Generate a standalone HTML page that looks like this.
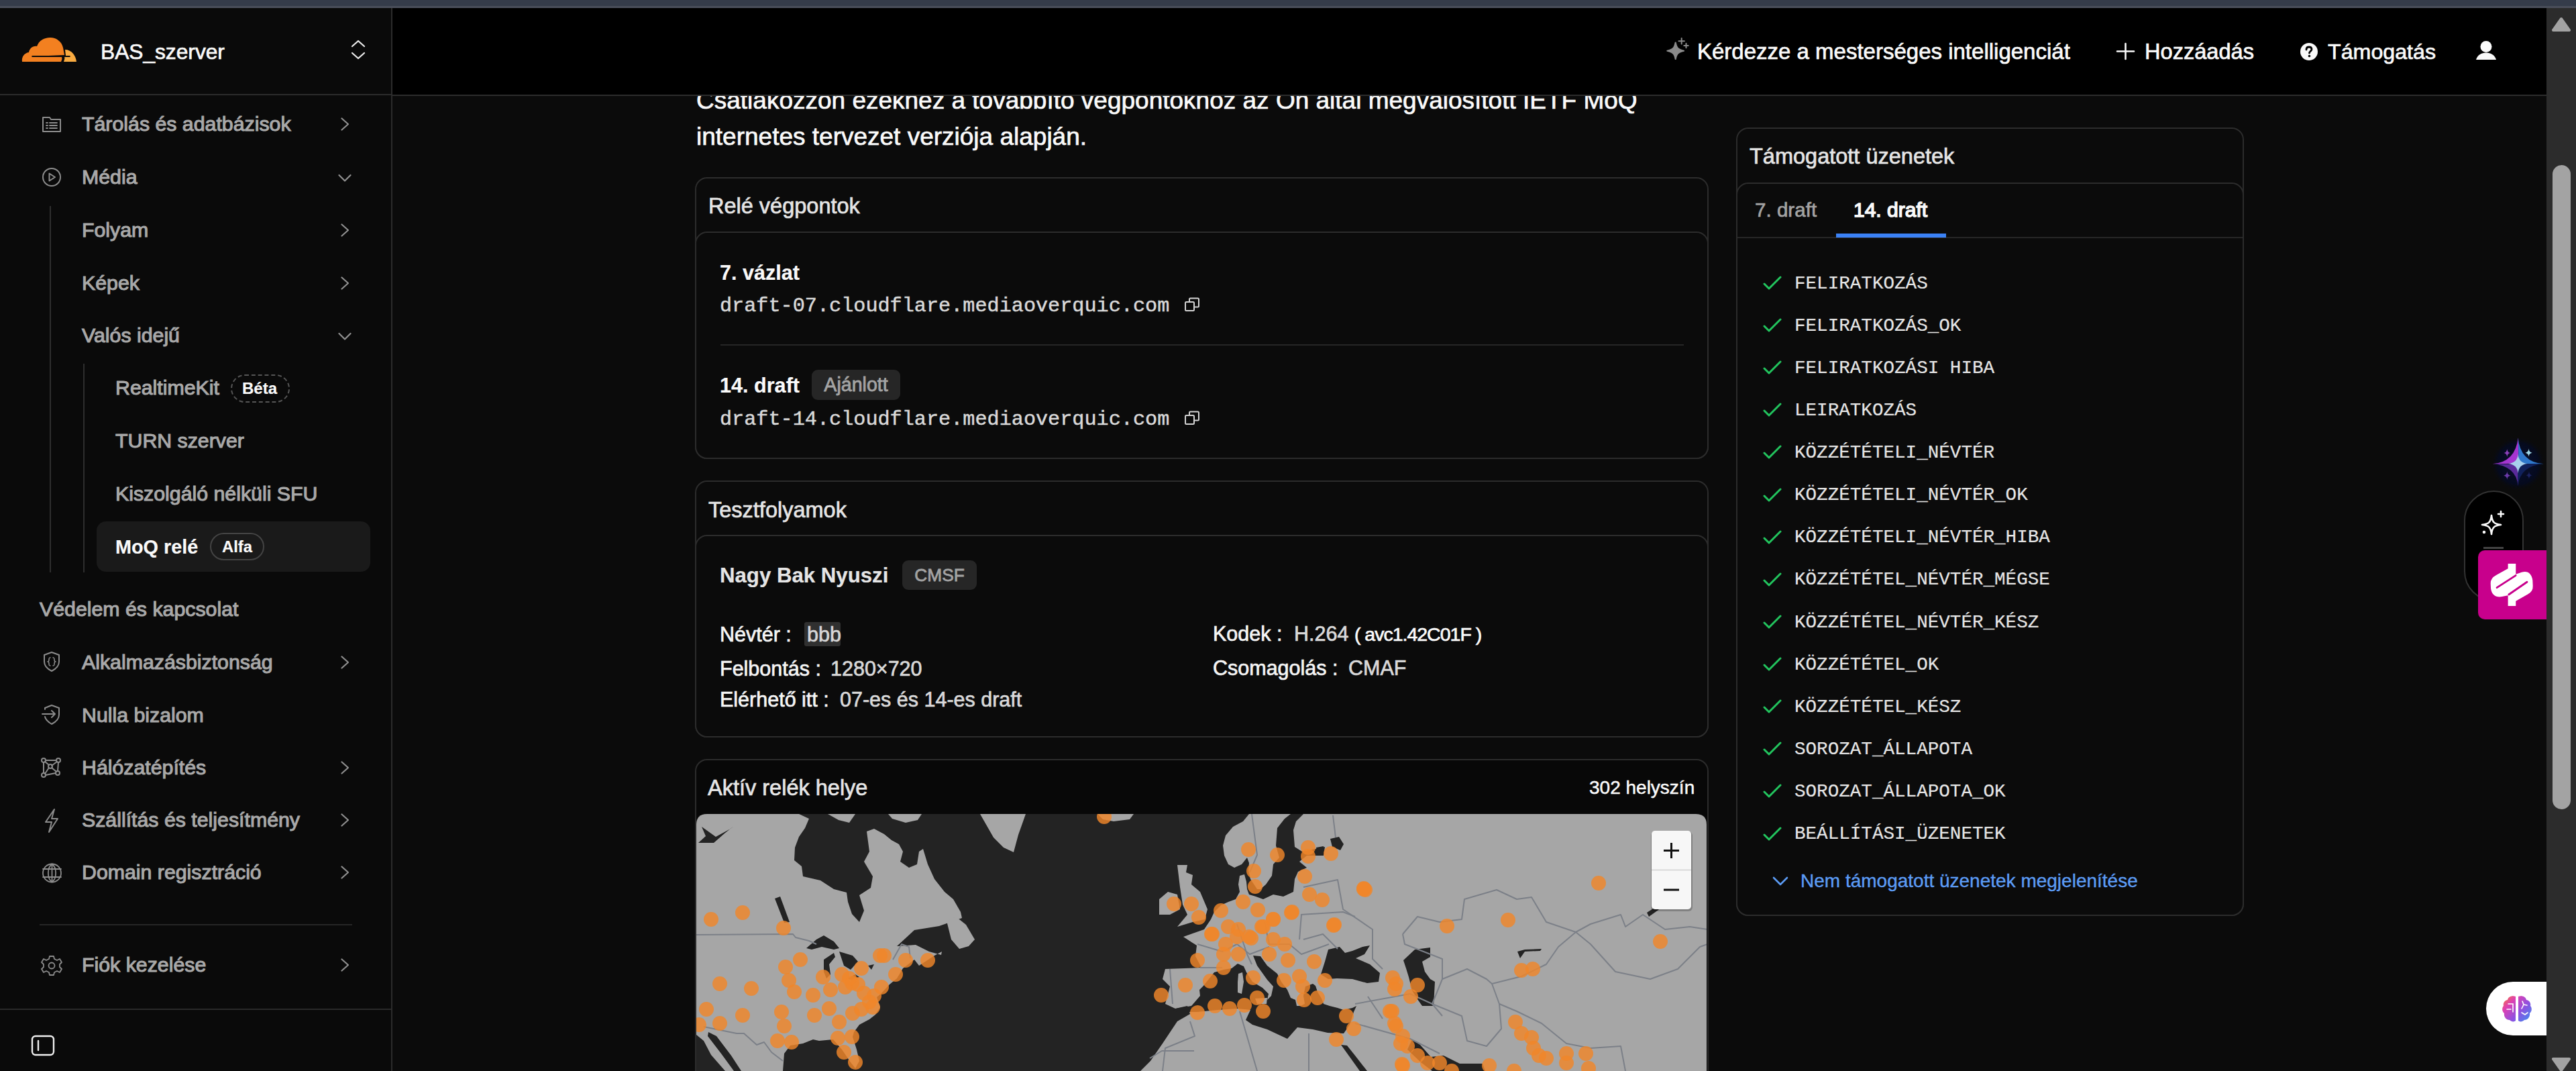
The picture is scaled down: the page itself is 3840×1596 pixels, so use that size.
<!DOCTYPE html>
<html><head><meta charset="utf-8">
<style>
*{box-sizing:border-box;margin:0;padding:0}
html,body{width:3840px;height:1596px;overflow:hidden;background:#0b0b0b;font-family:"Liberation Sans",sans-serif;color:#fafafa}
.a{position:absolute}
.t{position:absolute;white-space:nowrap;-webkit-text-stroke:0.7px currentColor}
.t.mono{font-family:"Liberation Mono",monospace;-webkit-text-stroke:0.5px currentColor}
#topbar{left:0;top:0;width:3840px;height:12px;background:#353c4a}
#side{left:0;top:12px;width:585px;height:1584px;background:#0a0a0a;border-right:2px solid #2c2c2c}
#mainhdr{left:585px;top:12px;width:3211px;height:131px;background:#000;border-bottom:2px solid #2c2c2c}
#sidehdr{left:0;top:140px;width:583px;height:2px;background:#2c2c2c}
.t.si{font-size:30.3px;color:#a8a8a8;-webkit-text-stroke:1.1px currentColor}
.card{position:absolute;border:2px solid #2c2c2c;border-radius:18px;background:#0b0b0b}
.ttl{font-size:32.5px;color:#e5e5e5}
.badge{position:absolute;border-radius:9px;background:#262626;color:#a3a3a3;font-size:28.6px;-webkit-text-stroke:0.8px currentColor;line-height:44px;text-align:center}
.msg{font-size:27.6px;color:#e5e5e5;-webkit-text-stroke:0.2px currentColor !important}
.lbl{font-size:30.5px;color:#f5f5f5}
.val{font-size:30.5px;color:#d9d9d9}
.t[style*="font-weight:700"]{-webkit-text-stroke:0.2px currentColor}

</style></head><body>
<div class="a" style="left:0;top:0;width:3840px;height:1596px;background:#0b0b0b"></div>
<div class="a" style="left:1038px;top:123px;width:1600px;font-size:37px;line-height:54px;color:#fafafa;white-space:nowrap;-webkit-text-stroke:0.7px currentColor">Csatlakozzon ezekhez a továbbító végpontokhoz az Ön által megvalósított IETF MoQ<br>internetes tervezet verziója alapján.</div>
<div class="card" style="left:1036px;top:264px;width:1511px;height:420px"></div>
<div class="t ttl" style="left:1056px;top:286.7px;height:40px;line-height:40px;">Relé végpontok</div>
<div class="card" style="left:1036px;top:345px;width:1511px;height:339px"></div>
<div class="t " style="left:1073px;top:385.8px;height:40px;line-height:40px;font-size:30.6px;font-weight:700;color:#fafafa">7. vázlat</div>
<div class="t mono" style="left:1073px;top:435.5px;height:40px;line-height:40px;font-size:30.2px;color:#d9d9d9">draft-07.cloudflare.mediaoverquic.com</div>
<svg class="a" style="left:1765px;top:442px" width="24" height="24" viewBox="0 0 24 24" fill="none" stroke="#d4d4d4" stroke-width="2" stroke-linecap="round" stroke-linejoin="round" ><rect x="2" y="8" width="13" height="13" rx="1.5"/><path d="M8 8 V4 C8 3 9 2.5 9.5 2.5 L20.5 2.5 C21.5 2.5 22 3 22 4 L22 14 C22 15 21.5 15.5 20.5 15.5 L15 15.5"/></svg>
<div class="a" style="left:1074px;top:513px;width:1436px;height:2px;background:#262626"></div>
<div class="t " style="left:1073px;top:554.0px;height:40px;line-height:40px;font-size:30.6px;font-weight:700;color:#fafafa">14. draft</div>
<div class="badge" style="left:1210px;top:551px;width:132px;height:45px">Ajánlott</div>
<div class="t mono" style="left:1073px;top:604.5px;height:40px;line-height:40px;font-size:30.2px;color:#d9d9d9">draft-14.cloudflare.mediaoverquic.com</div>
<svg class="a" style="left:1765px;top:611px" width="24" height="24" viewBox="0 0 24 24" fill="none" stroke="#d4d4d4" stroke-width="2" stroke-linecap="round" stroke-linejoin="round" ><rect x="2" y="8" width="13" height="13" rx="1.5"/><path d="M8 8 V4 C8 3 9 2.5 9.5 2.5 L20.5 2.5 C21.5 2.5 22 3 22 4 L22 14 C22 15 21.5 15.5 20.5 15.5 L15 15.5"/></svg>
<div class="card" style="left:1036px;top:716px;width:1511px;height:383px"></div>
<div class="t ttl" style="left:1056px;top:739.5px;height:40px;line-height:40px;">Tesztfolyamok</div>
<div class="card" style="left:1036px;top:797px;width:1511px;height:302px"></div>
<div class="t " style="left:1073px;top:837.8px;height:40px;line-height:40px;font-size:31.2px;font-weight:700;color:#e5e5e5">Nagy Bak Nyuszi</div>
<div class="badge" style="left:1345px;top:835px;width:111px;height:44px;font-size:26.3px;color:#a3a3a3">CMSF</div>
<div class="a" style="left:1199px;top:927px;width:54px;height:36px;background:#303030;border-radius:3px"></div>
<div class="t lbl" style="left:1073px;top:925.0px;height:40px;line-height:40px;">Névtér :</div>
<div class="t val" style="left:1203px;top:925.0px;height:40px;line-height:40px;color:#d6d6d6">bbb</div>
<div class="t lbl" style="left:1073px;top:975.5px;height:40px;line-height:40px;">Felbontás :</div>
<div class="t val" style="left:1238px;top:975.5px;height:40px;line-height:40px;">1280×720</div>
<div class="t lbl" style="left:1073px;top:1021.8px;height:40px;line-height:40px;">Elérhető itt :</div>
<div class="t val" style="left:1252px;top:1021.8px;height:40px;line-height:40px;">07-es és 14-es draft</div>
<div class="t lbl" style="left:1808px;top:923.5px;height:40px;line-height:40px;">Kodek :</div>
<div class="t val" style="left:1929px;top:923.5px;height:40px;line-height:40px;">H.264 <span style="color:#fafafa;letter-spacing:-1px;font-size:28.5px">( avc1.42C01F )</span></div>
<div class="t lbl" style="left:1808px;top:975.0px;height:40px;line-height:40px;">Csomagolás :</div>
<div class="t val" style="left:2010px;top:975.0px;height:40px;line-height:40px;">CMAF</div>
<div class="card" style="left:1036px;top:1131px;width:1511px;height:500px;background:#080808"></div>
<div class="t ttl" style="left:1055px;top:1153.6px;height:40px;line-height:40px;">Aktív relék helye</div>
<div class="t " style="left:2369px;top:1153.6px;height:40px;line-height:40px;font-size:28px;color:#fafafa;-webkit-text-stroke:0.5px #fafafa">302 helyszín</div>
<svg class="a" style="left:1038px;top:1213px" width="1506" height="383" viewBox="1038 1213 1506 383">
<defs><clipPath id="mc"><path d="M1038 1596 V1229 Q1038 1213 1054 1213 H2528 Q2544 1213 2544 1229 V1596 Z"/></clipPath></defs>
<g clip-path="url(#mc)">
<rect x="1038" y="1213" width="1506" height="383" fill="#232323"/>
<polygon points="1038,1213 1191,1213 1206,1220 1200,1234 1191,1247 1185,1263 1184,1282 1195,1291 1197,1306 1223,1312 1243,1325 1262,1330 1264,1344 1270,1362 1281,1374 1288,1357 1281,1334 1298,1323 1301,1306 1288,1284 1296,1269 1292,1239 1303,1235 1318,1243 1329,1252 1340,1258 1346,1269 1342,1284 1355,1293 1367,1288 1370,1269 1376,1265 1383,1288 1393,1310 1408,1329 1421,1340 1432,1359 1434,1368 1400,1380 1363,1386 1337,1410 1365,1408 1385,1418 1403,1423 1404,1418 1393,1424 1370,1439 1363,1430 1346,1443 1337,1458 1326,1467 1314,1480 1307,1486 1312,1501 1305,1512 1296,1519 1281,1527 1273,1538 1271,1545 1277,1564 1281,1581 1275,1592 1268,1583 1255,1564 1242,1549 1221,1551 1212,1549 1197,1555 1178,1558 1169,1570 1167,1596 1105,1596 1090,1573 1068,1544 1056,1538 1055,1544 1075,1570 1094,1596 1081,1596 1060,1572 1049,1551 1038,1542" fill="#a6a6a6"/>
<polygon points="1411,1372 1425,1366 1440,1378 1453,1400 1444,1410 1430,1414 1418,1400" fill="#a6a6a6"/>
<polygon points="1324,1213 1374,1213 1368,1222 1350,1226 1330,1220" fill="#a6a6a6"/>
<polygon points="1234,1213 1275,1213 1266,1226 1250,1222" fill="#a6a6a6"/>
<polygon points="1461,1213 1529,1213 1518,1244 1511,1270 1496,1263 1481,1248" fill="#a6a6a6"/>
<polygon points="1636,1213 1690,1213 1684,1221 1660,1224 1644,1221" fill="#a6a6a6"/>
<polygon points="1755,1289 1770,1289 1768,1300 1778,1304 1776,1318 1789,1329 1800,1355 1796,1370 1778,1374 1755,1381 1770,1363 1763,1348 1759,1322" fill="#a6a6a6"/>
<polygon points="1728,1340 1741,1329 1755,1333 1759,1355 1744,1363 1728,1363" fill="#a6a6a6"/>
<polygon points="1862,1213 1853,1224 1838,1232 1827,1245 1823,1260 1825,1275 1831,1288 1840,1293 1851,1288 1859,1278 1862,1286 1861,1297 1864,1310 1874,1325 1879,1325 1887,1318 1896,1305 1898,1288 1907,1278 1902,1260 1904,1234 1915,1220 1924,1213" fill="#a6a6a6"/>
<polygon points="1943,1213 1932,1224 1928,1237 1930,1262 1941,1269 1961,1265 1975,1262 1973,1275 1961,1275 1948,1275 1937,1284 1948,1293 1935,1299 1930,1310 1928,1329 1913,1336 1898,1333 1883,1340 1872,1336 1862,1333 1859,1325 1858,1314 1855,1303 1848,1305 1846,1318 1848,1329 1842,1340 1831,1344 1820,1349 1810,1359 1805,1370 1795,1385 1764,1396 1784,1409 1782,1425 1791,1442 1737,1444 1733,1459 1744,1470 1737,1496 1752,1503 1770,1499 1774,1511 1755,1522 1733,1555 1715,1581 1700,1596 1690,1596 2544,1596 2544,1213" fill="#a6a6a6"/>
<polygon points="1202,1413 1217,1400 1228,1394 1243,1403 1251,1413 1243,1415 1225,1411 1210,1415" fill="#232323"/>
<polygon points="1228,1430 1243,1420 1245,1426 1236,1437 1238,1452 1232,1458 1228,1448" fill="#232323"/>
<polygon points="1251,1418 1271,1424 1279,1433 1268,1445 1258,1439 1255,1430" fill="#232323"/>
<polygon points="1264,1458 1275,1452 1281,1456 1271,1461" fill="#232323"/>
<polygon points="1294,1439 1303,1437 1299,1445" fill="#232323"/>
<polygon points="1753,1503 1776,1499 1789,1484 1788,1475 1794,1469 1810,1449 1824,1445 1836,1443 1845,1436 1854,1440 1858,1449 1867,1463 1882,1472 1891,1481 1889,1490 1895,1484 1898,1470 1889,1460 1874,1439 1868,1424 1879,1425 1889,1439 1904,1451 1910,1463 1919,1475 1924,1487 1931,1490 1933,1499 1939,1499 1945,1496 1943,1484 1946,1470 1957,1466 1961,1469 1964,1478 1970,1488 1973,1496 1982,1499 1994,1502 2003,1505 2016,1502 2022,1499 2018,1508 2012,1527 2003,1540 1979,1539 1957,1534 1934,1531 1919,1548 1889,1534 1867,1527 1857,1520 1864,1505 1845,1503 1815,1505 1785,1508 1755,1508 1749,1505" fill="#232323"/>
<polygon points="1980,1415 1997,1411 2005,1420 2016,1417 2031,1411 2042,1409 2034,1422 2021,1428 2042,1437 2057,1450 2055,1463 2038,1465 2016,1459 1993,1458 1980,1459 1969,1452 1975,1433" fill="#232323"/>
<polygon points="2092,1431 2109,1415 2132,1412 2132,1426 2120,1433 2124,1448 2132,1459 2139,1463 2137,1499 2120,1499 2113,1489 2105,1476 2100,1456 2096,1443" fill="#232323"/>
<polygon points="1999,1557 2008,1558 2020,1573 2038,1596 2027,1596 2012,1575" fill="#232323"/>
<polygon points="2105,1549 2117,1557 2133,1575 2152,1573 2176,1585 2210,1585 2214,1596 2135,1596 2118,1583 2098,1564" fill="#232323"/>
<polygon points="1046,1232 1067,1247 1089,1235 1095,1230 1080,1242 1064,1256 1041,1256 1052,1246" fill="#232323"/>
<polygon points="1155,1339 1163,1336 1177,1374 1169,1375" fill="#232323"/>
<polygon points="2455,1360 2470,1350 2480,1340 2484,1344 2472,1356 2458,1366" fill="#232323"/>
<polygon points="2262,1418 2273,1415 2298,1414 2296,1417 2273,1418 2266,1428" fill="#232323"/>
<polygon points="1983,1250 1996,1247 2003,1258 1998,1267 1986,1262" fill="#232323"/>
<polygon points="1962,1263 1973,1261 1974,1273 1964,1275" fill="#232323"/>
<polygon points="1846,1451 1852,1449 1854,1463 1851,1481 1845,1479 1845,1464" fill="#a6a6a6"/>
<polygon points="1871,1488 1889,1487 1888,1496 1874,1496" fill="#a6a6a6"/>
<g fill="none" stroke="#7c8088" stroke-width="2" stroke-linejoin="round">
<polyline points="1038,1393 1182,1392 1186,1397 1206,1402 1217,1407"/>
<polyline points="1049,1530 1098,1540 1109,1540 1128,1557 1139,1553 1150,1568 1167,1581"/>
<polyline points="1331,1430 1344,1407 1355,1411 1357,1428"/>
<polyline points="2091,1392 2113,1366 2146,1374 2179,1370 2183,1340 2231,1326 2261,1340 2283,1337 2305,1374 2349,1389"/>
<polyline points="2091,1392 2094,1407 2150,1429 2150,1459 2187,1444 2216,1459 2224,1466 2268,1455 2305,1437 2323,1411 2349,1389"/>
<polyline points="2349,1389 2371,1407 2408,1448 2460,1459 2501,1444 2534,1411 2545,1407"/>
<polyline points="2349,1389 2371,1377 2416,1363 2423,1381 2449,1363 2482,1385 2519,1381 2545,1385"/>
<polyline points="2224,1466 2235,1496 2261,1507 2298,1525 2335,1555 2371,1562 2416,1559 2423,1596"/>
<polyline points="2135,1496 2179,1514 2187,1551 2216,1559 2238,1533 2235,1496"/>
<polyline points="2150,1459 2135,1496 2150,1514"/>
<polyline points="1943,1322 1994,1311 2002,1355 2046,1385 2046,1429 2061,1444"/>
<polyline points="1991,1248 1987,1215"/>
<polyline points="1939,1363 2002,1359 2020,1366"/>
<polyline points="1943,1400 1972,1392 1994,1414"/>
<polyline points="2020,1496 2102,1481 2135,1496"/>
<polyline points="2020,1525 2102,1548 2146,1570"/>
<polyline points="2039,1485 2061,1518"/>
<polyline points="1951,1540 1951,1596"/>
<polyline points="1848,1507 1874,1596"/>
<polyline points="1774,1522 1781,1544 1737,1562 1733,1596"/>
<polyline points="1866,1213 1874,1274 1863,1300"/>
<polyline points="1785,1407 1822,1418 1844,1407 1863,1422 1892,1411"/>
<polyline points="1844,1377 1859,1422 1866,1437"/>
<polyline points="1885,1374 1892,1407 1922,1407 1940,1422 1981,1407"/>
<polyline points="1940,1363 1937,1400"/>
<polyline points="1789,1442 1822,1442"/>
<polyline points="1744,1444 1748,1496"/>
<polyline points="1714,1577 1732,1566 1780,1566"/>
</g>
<g fill="#f0862a" fill-opacity="0.82">
<circle cx="1193" cy="1430" r="11"/>
<circle cx="1171" cy="1441" r="11"/>
<circle cx="1073" cy="1466" r="11"/>
<circle cx="1120" cy="1473" r="11"/>
<circle cx="1176" cy="1461" r="11"/>
<circle cx="1184" cy="1478" r="11"/>
<circle cx="1212" cy="1483" r="11"/>
<circle cx="1227" cy="1456" r="11"/>
<circle cx="1238" cy="1475" r="11"/>
<circle cx="1255" cy="1452" r="11"/>
<circle cx="1260" cy="1471" r="11"/>
<circle cx="1270" cy="1465" r="11"/>
<circle cx="1279" cy="1467" r="11"/>
<circle cx="1284" cy="1443" r="11"/>
<circle cx="1312" cy="1424" r="11"/>
<circle cx="1318" cy="1424" r="11"/>
<circle cx="1350" cy="1431" r="11"/>
<circle cx="1383" cy="1431" r="11"/>
<circle cx="1335" cy="1452" r="11"/>
<circle cx="1314" cy="1471" r="11"/>
<circle cx="1303" cy="1484" r="11"/>
<circle cx="1296" cy="1493" r="11"/>
<circle cx="1301" cy="1501" r="11"/>
<circle cx="1053" cy="1504" r="11"/>
<circle cx="1107" cy="1513" r="11"/>
<circle cx="1073" cy="1525" r="11"/>
<circle cx="1042" cy="1527" r="11"/>
<circle cx="1165" cy="1508" r="11"/>
<circle cx="1169" cy="1529" r="11"/>
<circle cx="1214" cy="1513" r="11"/>
<circle cx="1236" cy="1503" r="11"/>
<circle cx="1251" cy="1523" r="11"/>
<circle cx="1271" cy="1510" r="11"/>
<circle cx="1284" cy="1504" r="11"/>
<circle cx="1159" cy="1551" r="11"/>
<circle cx="1180" cy="1553" r="11"/>
<circle cx="1249" cy="1547" r="11"/>
<circle cx="1270" cy="1545" r="11"/>
<circle cx="1258" cy="1568" r="11"/>
<circle cx="1275" cy="1583" r="11"/>
<circle cx="1266" cy="1458" r="11"/>
<circle cx="1288" cy="1480" r="11"/>
<circle cx="1060" cy="1370" r="11"/>
<circle cx="1107" cy="1360" r="11"/>
<circle cx="1168" cy="1383" r="11"/>
<circle cx="1646" cy="1217" r="11"/>
<circle cx="1861" cy="1266" r="11"/>
<circle cx="1904" cy="1274" r="11"/>
<circle cx="1950" cy="1263" r="11"/>
<circle cx="1950" cy="1276" r="11"/>
<circle cx="1984" cy="1272" r="11"/>
<circle cx="1869" cy="1298" r="11"/>
<circle cx="1871" cy="1321" r="11"/>
<circle cx="1945" cy="1306" r="11"/>
<circle cx="1952" cy="1333" r="11"/>
<circle cx="1971" cy="1341" r="11"/>
<circle cx="2033" cy="1324" r="11"/>
<circle cx="1750" cy="1347" r="11"/>
<circle cx="1776" cy="1347" r="11"/>
<circle cx="1787" cy="1367" r="11"/>
<circle cx="1820" cy="1357" r="11"/>
<circle cx="1853" cy="1344" r="11"/>
<circle cx="1875" cy="1356" r="11"/>
<circle cx="1898" cy="1370" r="11"/>
<circle cx="1925" cy="1360" r="11"/>
<circle cx="1989" cy="1378" r="11"/>
<circle cx="1806" cy="1392" r="11"/>
<circle cx="1831" cy="1381" r="11"/>
<circle cx="1846" cy="1385" r="11"/>
<circle cx="1883" cy="1381" r="11"/>
<circle cx="1898" cy="1400" r="11"/>
<circle cx="1915" cy="1407" r="11"/>
<circle cx="1862" cy="1396" r="11"/>
<circle cx="1827" cy="1407" r="11"/>
<circle cx="1785" cy="1431" r="11"/>
<circle cx="1804" cy="1462" r="11"/>
<circle cx="1824" cy="1442" r="11"/>
<circle cx="1767" cy="1468" r="11"/>
<circle cx="1731" cy="1483" r="11"/>
<circle cx="1785" cy="1509" r="11"/>
<circle cx="1811" cy="1499" r="11"/>
<circle cx="1833" cy="1503" r="11"/>
<circle cx="1855" cy="1498" r="11"/>
<circle cx="1874" cy="1487" r="11"/>
<circle cx="1883" cy="1507" r="11"/>
<circle cx="1868" cy="1457" r="11"/>
<circle cx="1892" cy="1422" r="11"/>
<circle cx="1920" cy="1431" r="11"/>
<circle cx="1959" cy="1433" r="11"/>
<circle cx="1914" cy="1461" r="11"/>
<circle cx="1937" cy="1455" r="11"/>
<circle cx="1942" cy="1470" r="11"/>
<circle cx="1944" cy="1490" r="11"/>
<circle cx="1964" cy="1487" r="11"/>
<circle cx="1975" cy="1461" r="11"/>
<circle cx="2007" cy="1514" r="11"/>
<circle cx="2018" cy="1533" r="11"/>
<circle cx="1992" cy="1549" r="11"/>
<circle cx="1824" cy="1422" r="11"/>
<circle cx="1846" cy="1422" r="11"/>
<circle cx="1807" cy="1392" r="11"/>
<circle cx="1844" cy="1396" r="11"/>
<circle cx="1865" cy="1398" r="11"/>
<circle cx="1881" cy="1381" r="11"/>
<circle cx="1898" cy="1370" r="11"/>
<circle cx="1926" cy="1359" r="11"/>
<circle cx="1988" cy="1379" r="11"/>
<circle cx="2035" cy="1326" r="11"/>
<circle cx="2081" cy="1466" r="11"/>
<circle cx="2075" cy="1507" r="11"/>
<circle cx="2081" cy="1529" r="11"/>
<circle cx="2088" cy="1555" r="11"/>
<circle cx="2090" cy="1586" r="11"/>
<circle cx="2033" cy="1325" r="11"/>
<circle cx="2383" cy="1316" r="11"/>
<circle cx="2157" cy="1380" r="11"/>
<circle cx="2248" cy="1371" r="11"/>
<circle cx="2475" cy="1403" r="11"/>
<circle cx="2268" cy="1446" r="11"/>
<circle cx="2285" cy="1444" r="11"/>
<circle cx="2113" cy="1468" r="11"/>
<circle cx="2103" cy="1485" r="11"/>
<circle cx="2076" cy="1457" r="11"/>
<circle cx="2079" cy="1474" r="11"/>
<circle cx="2072" cy="1507" r="11"/>
<circle cx="2079" cy="1525" r="11"/>
<circle cx="2091" cy="1544" r="11"/>
<circle cx="2098" cy="1559" r="11"/>
<circle cx="2113" cy="1573" r="11"/>
<circle cx="2128" cy="1584" r="11"/>
<circle cx="2146" cy="1584" r="11"/>
<circle cx="2164" cy="1596" r="11"/>
<circle cx="2091" cy="1588" r="11"/>
<circle cx="2259" cy="1523" r="11"/>
<circle cx="2268" cy="1540" r="11"/>
<circle cx="2283" cy="1546" r="11"/>
<circle cx="2286" cy="1562" r="11"/>
<circle cx="2294" cy="1573" r="11"/>
<circle cx="2305" cy="1577" r="11"/>
<circle cx="2335" cy="1570" r="11"/>
<circle cx="2364" cy="1570" r="11"/>
<circle cx="2335" cy="1584" r="11"/>
<circle cx="2368" cy="1592" r="11"/>
<circle cx="2220" cy="1588" r="11"/>
<circle cx="2257" cy="1596" r="11"/>
</g>
</g>
<rect x="2461" y="1239" width="62" height="119" rx="6" fill="#000" fill-opacity="0.22"/><rect x="2462" y="1238" width="59" height="117" rx="5" fill="#f7f7f7"/>
<path d="M2462 1296.5 H2521" stroke="#d0d0d0" stroke-width="1.5"/>
<path d="M2491.5 1256 V1279 M2480 1267.5 H2503 M2480 1326 H2503" stroke="#111" stroke-width="3"/>
</svg>
<div class="card" style="left:2588px;top:190px;width:757px;height:1175px"></div>
<div class="t ttl" style="left:2608px;top:212.8px;height:40px;line-height:40px;">Támogatott üzenetek</div>
<div class="card" style="left:2588px;top:272px;width:757px;height:1093px"></div>
<div class="a" style="left:2590px;top:353px;width:753px;height:2px;background:#262626"></div>
<div class="t " style="left:2616px;top:292.7px;height:40px;line-height:40px;font-size:29.6px;color:#a3a3a3">7. draft</div>
<div class="t " style="left:2763px;top:292.7px;height:40px;line-height:40px;font-size:30px;color:#fafafa;-webkit-text-stroke:1.5px #fafafa">14. draft</div>
<div class="a" style="left:2737px;top:348px;width:164px;height:6px;background:#3b82f6"></div>
<svg class="a" style="left:2628px;top:411px" width="28" height="22" viewBox="0 0 28 22" fill="none" stroke="#22c55e" stroke-width="3" stroke-linecap="round" stroke-linejoin="round" ><path d="M2 12 L9 19 L26 2"/></svg>
<div class="t mono msg" style="left:2675px;top:402.5px;height:40px;line-height:40px;">FELIRATKOZÁS</div>
<svg class="a" style="left:2628px;top:474px" width="28" height="22" viewBox="0 0 28 22" fill="none" stroke="#22c55e" stroke-width="3" stroke-linecap="round" stroke-linejoin="round" ><path d="M2 12 L9 19 L26 2"/></svg>
<div class="t mono msg" style="left:2675px;top:465.6px;height:40px;line-height:40px;">FELIRATKOZÁS_OK</div>
<svg class="a" style="left:2628px;top:537px" width="28" height="22" viewBox="0 0 28 22" fill="none" stroke="#22c55e" stroke-width="3" stroke-linecap="round" stroke-linejoin="round" ><path d="M2 12 L9 19 L26 2"/></svg>
<div class="t mono msg" style="left:2675px;top:528.7px;height:40px;line-height:40px;">FELIRATKOZÁSI HIBA</div>
<svg class="a" style="left:2628px;top:600px" width="28" height="22" viewBox="0 0 28 22" fill="none" stroke="#22c55e" stroke-width="3" stroke-linecap="round" stroke-linejoin="round" ><path d="M2 12 L9 19 L26 2"/></svg>
<div class="t mono msg" style="left:2675px;top:591.9px;height:40px;line-height:40px;">LEIRATKOZÁS</div>
<svg class="a" style="left:2628px;top:663px" width="28" height="22" viewBox="0 0 28 22" fill="none" stroke="#22c55e" stroke-width="3" stroke-linecap="round" stroke-linejoin="round" ><path d="M2 12 L9 19 L26 2"/></svg>
<div class="t mono msg" style="left:2675px;top:655.0px;height:40px;line-height:40px;">KÖZZÉTÉTELI_NÉVTÉR</div>
<svg class="a" style="left:2628px;top:727px" width="28" height="22" viewBox="0 0 28 22" fill="none" stroke="#22c55e" stroke-width="3" stroke-linecap="round" stroke-linejoin="round" ><path d="M2 12 L9 19 L26 2"/></svg>
<div class="t mono msg" style="left:2675px;top:718.1px;height:40px;line-height:40px;">KÖZZÉTÉTELI_NÉVTÉR_OK</div>
<svg class="a" style="left:2628px;top:790px" width="28" height="22" viewBox="0 0 28 22" fill="none" stroke="#22c55e" stroke-width="3" stroke-linecap="round" stroke-linejoin="round" ><path d="M2 12 L9 19 L26 2"/></svg>
<div class="t mono msg" style="left:2675px;top:781.2px;height:40px;line-height:40px;">KÖZZÉTÉTELI_NÉVTÉR_HIBA</div>
<svg class="a" style="left:2628px;top:853px" width="28" height="22" viewBox="0 0 28 22" fill="none" stroke="#22c55e" stroke-width="3" stroke-linecap="round" stroke-linejoin="round" ><path d="M2 12 L9 19 L26 2"/></svg>
<div class="t mono msg" style="left:2675px;top:844.3px;height:40px;line-height:40px;">KÖZZÉTÉTEL_NÉVTÉR_MÉGSE</div>
<svg class="a" style="left:2628px;top:916px" width="28" height="22" viewBox="0 0 28 22" fill="none" stroke="#22c55e" stroke-width="3" stroke-linecap="round" stroke-linejoin="round" ><path d="M2 12 L9 19 L26 2"/></svg>
<div class="t mono msg" style="left:2675px;top:907.5px;height:40px;line-height:40px;">KÖZZÉTÉTEL_NÉVTÉR_KÉSZ</div>
<svg class="a" style="left:2628px;top:979px" width="28" height="22" viewBox="0 0 28 22" fill="none" stroke="#22c55e" stroke-width="3" stroke-linecap="round" stroke-linejoin="round" ><path d="M2 12 L9 19 L26 2"/></svg>
<div class="t mono msg" style="left:2675px;top:970.6px;height:40px;line-height:40px;">KÖZZÉTÉTEL_OK</div>
<svg class="a" style="left:2628px;top:1042px" width="28" height="22" viewBox="0 0 28 22" fill="none" stroke="#22c55e" stroke-width="3" stroke-linecap="round" stroke-linejoin="round" ><path d="M2 12 L9 19 L26 2"/></svg>
<div class="t mono msg" style="left:2675px;top:1033.7px;height:40px;line-height:40px;">KÖZZÉTÉTEL_KÉSZ</div>
<svg class="a" style="left:2628px;top:1105px" width="28" height="22" viewBox="0 0 28 22" fill="none" stroke="#22c55e" stroke-width="3" stroke-linecap="round" stroke-linejoin="round" ><path d="M2 12 L9 19 L26 2"/></svg>
<div class="t mono msg" style="left:2675px;top:1096.8px;height:40px;line-height:40px;">SOROZAT_ÁLLAPOTA</div>
<svg class="a" style="left:2628px;top:1168px" width="28" height="22" viewBox="0 0 28 22" fill="none" stroke="#22c55e" stroke-width="3" stroke-linecap="round" stroke-linejoin="round" ><path d="M2 12 L9 19 L26 2"/></svg>
<div class="t mono msg" style="left:2675px;top:1159.9px;height:40px;line-height:40px;">SOROZAT_ÁLLAPOTA_OK</div>
<svg class="a" style="left:2628px;top:1232px" width="28" height="22" viewBox="0 0 28 22" fill="none" stroke="#22c55e" stroke-width="3" stroke-linecap="round" stroke-linejoin="round" ><path d="M2 12 L9 19 L26 2"/></svg>
<div class="t mono msg" style="left:2675px;top:1223.1px;height:40px;line-height:40px;">BEÁLLÍTÁSI_ÜZENETEK</div>
<svg class="a" style="left:2641px;top:1305px" width="26" height="16" viewBox="0 0 26 16" fill="none" stroke="#5c9cf5" stroke-width="2.6" stroke-linecap="round" stroke-linejoin="round" ><path d="M3 3 L13 13 L23 3"/></svg>
<div class="t " style="left:2684px;top:1293.0px;height:40px;line-height:40px;font-size:28px;color:#5c9cf5;-webkit-text-stroke:0.4px #5c9cf5">Nem támogatott üzenetek megjelenítése</div>
<div id="mainhdr" class="a"></div>
<svg class="a" style="left:2482px;top:55px" width="36" height="36" viewBox="0 0 36 36">
<path d="M15.7 8.5 C17 15.5 18.5 18.5 28 20.8 C18.5 23 17 26 15.7 33 C14.4 26 12.9 23 3.4 20.8 C12.9 18.5 14.4 15.5 15.7 8.5 Z" fill="#8a8a8a" stroke="#8a8a8a" stroke-width="2.2" stroke-linejoin="round"/>
<path d="M24.7 2 V10.4 M20.5 6.2 H28.9 M31.5 9.8 V16.2 M28.3 13 H34.7" stroke="#8a8a8a" stroke-width="2" stroke-linecap="round"/></svg>
<div class="t " style="left:2530px;top:56.5px;height:40px;line-height:40px;font-size:33px;color:#fafafa">Kérdezze a mesterséges intelligenciát</div>
<svg class="a" style="left:3154px;top:63px" width="29" height="27" viewBox="0 0 29 27" fill="none" stroke="#fafafa" stroke-width="2.6" stroke-linecap="round" stroke-linejoin="round" ><path d="M14.5 2 V25 M2 13.5 H27"/></svg>
<div class="t " style="left:3197px;top:56.5px;height:40px;line-height:40px;font-size:32.6px;color:#fafafa">Hozzáadás</div>
<svg class="a" style="left:3428px;top:63px" width="28" height="28" viewBox="0 0 28 28"><circle cx="14" cy="14" r="13" fill="#fafafa"/>
<path d="M10 11 C10 8 12 7 14 7 C16.5 7 18 8.5 18 10.5 C18 13 14.5 13.5 14.5 16" stroke="#000" stroke-width="2.8" fill="none" stroke-linecap="round"/><circle cx="14.5" cy="20.5" r="1.8" fill="#000"/></svg>
<div class="t " style="left:3470px;top:56.5px;height:40px;line-height:40px;font-size:32.2px;color:#fafafa">Támogatás</div>
<svg class="a" style="left:3690px;top:60px" width="32" height="30" viewBox="0 0 32 30"><circle cx="16" cy="9.5" r="8.5" fill="#fafafa"/>
<path d="M1 29 C3 22 9 18.5 16 18.5 C23 18.5 29 22 31 29 Z" fill="#fafafa"/></svg>
<div id="side" class="a"></div>
<div id="sidehdr" class="a"></div>
<svg class="a" style="left:30px;top:52px" width="86" height="42" viewBox="0 0 86 42">
<path d="M3 40 C2 33 6 27 13 26 C14 20 19 16 25 17 C28 9 35 4 45 4 C54 4 62 10 64 19 L66 30 C58 30 50 31 42 31 L18 31 C17 31 17 33 18 33 L62 33 C63 35 62 38 61 40 Z" fill="#f38020"/>
<path d="M67 22 C76 22 83 30 84 40 L65 40 C66 37 67 34 66 33 L74 33 C75 33 75 31 74 31 L68 31 Z" fill="#f9ab41"/>
</svg>
<div class="t " style="left:150px;top:56.7px;height:40px;line-height:40px;font-size:31.7px;color:#fafafa">BAS_szerver</div>
<svg class="a" style="left:522px;top:59px" width="24" height="30" viewBox="0 0 24 30" fill="none" stroke="#f0f0f0" stroke-width="2.2" stroke-linecap="round" stroke-linejoin="round" ><path d="M3 10 L12 2 L21 10"/><path d="M3 20 L12 28 L21 20"/></svg>
<div class="a" style="left:74px;top:307px;width:2px;height:546px;background:#2e2e2e"></div>
<div class="a" style="left:124px;top:542px;width:2px;height:311px;background:#2e2e2e"></div>
<div class="a" style="left:144px;top:777px;width:408px;height:75px;border-radius:14px;background:#1a1a1a"></div>
<div class="t si" style="left:122px;top:164.5px;height:40px;line-height:40px;">Tárolás és adatbázisok</div>
<svg class="a" style="left:507px;top:173.5px" width="18" height="22" viewBox="0 0 18 22" fill="none" stroke="#8f8f8f" stroke-width="2.2" stroke-linecap="round" stroke-linejoin="round" ><path d="M2.5 2.5 L12 11 L2.5 19.5"/></svg>
<div class="t si" style="left:122px;top:243.5px;height:40px;line-height:40px;">Média</div>
<svg class="a" style="left:503px;top:257.5px" width="24" height="14" viewBox="0 0 24 14" fill="none" stroke="#8f8f8f" stroke-width="2.2" stroke-linecap="round" stroke-linejoin="round" ><path d="M2.5 3 L11 11.5 L19.5 3"/></svg>
<div class="t si" style="left:122px;top:322.5px;height:40px;line-height:40px;">Folyam</div>
<svg class="a" style="left:507px;top:331.5px" width="18" height="22" viewBox="0 0 18 22" fill="none" stroke="#8f8f8f" stroke-width="2.2" stroke-linecap="round" stroke-linejoin="round" ><path d="M2.5 2.5 L12 11 L2.5 19.5"/></svg>
<div class="t si" style="left:122px;top:401.5px;height:40px;line-height:40px;">Képek</div>
<svg class="a" style="left:507px;top:410.5px" width="18" height="22" viewBox="0 0 18 22" fill="none" stroke="#8f8f8f" stroke-width="2.2" stroke-linecap="round" stroke-linejoin="round" ><path d="M2.5 2.5 L12 11 L2.5 19.5"/></svg>
<div class="t si" style="left:122px;top:480.0px;height:40px;line-height:40px;">Valós idejű</div>
<svg class="a" style="left:503px;top:494px" width="24" height="14" viewBox="0 0 24 14" fill="none" stroke="#8f8f8f" stroke-width="2.2" stroke-linecap="round" stroke-linejoin="round" ><path d="M2.5 3 L11 11.5 L19.5 3"/></svg>
<div class="t si" style="left:172px;top:558.0px;height:40px;line-height:40px;">RealtimeKit</div>
<div class="t si" style="left:172px;top:637.0px;height:40px;line-height:40px;">TURN szerver</div>
<div class="t si" style="left:172px;top:715.5px;height:40px;line-height:40px;">Kiszolgáló nélküli SFU</div>
<div class="t si" style="left:59px;top:887.7px;height:40px;line-height:40px;">Védelem és kapcsolat</div>
<div class="t si" style="left:122px;top:966.5px;height:40px;line-height:40px;">Alkalmazásbiztonság</div>
<svg class="a" style="left:507px;top:975.5px" width="18" height="22" viewBox="0 0 18 22" fill="none" stroke="#8f8f8f" stroke-width="2.2" stroke-linecap="round" stroke-linejoin="round" ><path d="M2.5 2.5 L12 11 L2.5 19.5"/></svg>
<div class="t si" style="left:122px;top:1045.5px;height:40px;line-height:40px;">Nulla bizalom</div>
<div class="t si" style="left:122px;top:1123.6px;height:40px;line-height:40px;">Hálózatépítés</div>
<svg class="a" style="left:507px;top:1132.6px" width="18" height="22" viewBox="0 0 18 22" fill="none" stroke="#8f8f8f" stroke-width="2.2" stroke-linecap="round" stroke-linejoin="round" ><path d="M2.5 2.5 L12 11 L2.5 19.5"/></svg>
<div class="t si" style="left:122px;top:1201.7px;height:40px;line-height:40px;">Szállítás és teljesítmény</div>
<svg class="a" style="left:507px;top:1210.7px" width="18" height="22" viewBox="0 0 18 22" fill="none" stroke="#8f8f8f" stroke-width="2.2" stroke-linecap="round" stroke-linejoin="round" ><path d="M2.5 2.5 L12 11 L2.5 19.5"/></svg>
<div class="t si" style="left:122px;top:1280.0px;height:40px;line-height:40px;">Domain regisztráció</div>
<svg class="a" style="left:507px;top:1289px" width="18" height="22" viewBox="0 0 18 22" fill="none" stroke="#8f8f8f" stroke-width="2.2" stroke-linecap="round" stroke-linejoin="round" ><path d="M2.5 2.5 L12 11 L2.5 19.5"/></svg>
<div class="t si" style="left:122px;top:1417.5px;height:40px;line-height:40px;">Fiók kezelése</div>
<svg class="a" style="left:507px;top:1426.5px" width="18" height="22" viewBox="0 0 18 22" fill="none" stroke="#8f8f8f" stroke-width="2.2" stroke-linecap="round" stroke-linejoin="round" ><path d="M2.5 2.5 L12 11 L2.5 19.5"/></svg>
<div class="t " style="left:172px;top:794.7px;height:40px;line-height:40px;font-size:28.8px;color:#fafafa;font-weight:700">MoQ relé</div>
<div class="a" style="left:344px;top:558px;width:88px;height:42px;border:2px dashed #555;border-radius:21px"></div>
<div class="t " style="left:361px;top:559.0px;height:40px;line-height:40px;font-size:24px;color:#fafafa;font-weight:700">Béta</div>
<div class="a" style="left:313px;top:794px;width:81px;height:41px;border:2px solid #444;border-radius:21px"></div>
<div class="t " style="left:331px;top:794.5px;height:40px;line-height:40px;font-size:23.8px;color:#fafafa;font-weight:700">Alfa</div>
<svg class="a" style="left:62px;top:172px" width="30" height="26" viewBox="0 0 30 26" fill="none" stroke="#8c8c8c" stroke-width="2" stroke-linecap="round" stroke-linejoin="round" ><path d="M2 3 L12 3 L14 6 L28 6 L28 24 L2 24 Z"/><path d="M7 11 H9 M12 11 H23 M7 15 H9 M12 15 H23 M7 19 H9 M12 19 H23" stroke-width="1.8"/></svg>
<svg class="a" style="left:62px;top:249px" width="30" height="30" viewBox="0 0 30 30" fill="none" stroke="#8c8c8c" stroke-width="2" stroke-linecap="round" stroke-linejoin="round" ><circle cx="15" cy="15" r="13"/><path d="M11.5 9.5 L20 15 L11.5 20.5 Z"/></svg>
<svg class="a" style="left:63px;top:970px" width="28" height="32" viewBox="0 0 28 32" fill="none" stroke="#8c8c8c" stroke-width="2" stroke-linecap="round" stroke-linejoin="round" ><path d="M14 2 L25 6 L25 16 C25 23 20 27 14 30 C8 27 3 23 3 16 L3 6 Z"/><path d="M12 10 C10 10 10 11 10 13 C10 15 9 16 8 16 C9 16 10 17 10 19 C10 21 10 22 12 22 M16 10 C18 10 18 11 18 13 C18 15 19 16 20 16 C19 16 18 17 18 19 C18 21 18 22 16 22" stroke-width="1.6"/></svg>
<svg class="a" style="left:61px;top:1049px" width="30" height="32" viewBox="0 0 30 32" fill="none" stroke="#8c8c8c" stroke-width="2" stroke-linecap="round" stroke-linejoin="round" ><path d="M6 8 L6 6 L16 2 L27 6 L27 16 C27 23 22 27 16 30 C11 27 7 24 6 19"/><path d="M2 15 H21 M16 10 L21 15 L16 20"/></svg>
<svg class="a" style="left:60px;top:1128px" width="32" height="32" viewBox="0 0 32 32" fill="none" stroke="#8c8c8c" stroke-width="2" stroke-linecap="round" stroke-linejoin="round" ><circle cx="5" cy="5" r="3"/><circle cx="27" cy="5" r="3"/><circle cx="15" cy="14" r="3"/><circle cx="5" cy="27" r="3"/><circle cx="26" cy="24" r="3"/><path d="M8 5 H24 M5 8 V24 M27 8 L26 21 M7 7 L13 12 M17 13 L25 7 M13 16 L7 25 M17 16 L24 22 M8 27 L23 24"/></svg>
<svg class="a" style="left:64px;top:1204px" width="26" height="38" viewBox="0 0 26 38" fill="none" stroke="#8c8c8c" stroke-width="2" stroke-linecap="round" stroke-linejoin="round" ><path d="M17 2 L4 21 L13 21 L9 36 L22 16 L13 16 Z"/></svg>
<svg class="a" style="left:62px;top:1285px" width="31" height="32" viewBox="0 0 31 32" fill="none" stroke="#8c8c8c" stroke-width="1.8" stroke-linecap="round" stroke-linejoin="round" ><circle cx="15.5" cy="16" r="13.5"/><path d="M2 10 H29 M2 22 H29 M15.5 2.5 V29.5 M15.5 2.5 C8 8 8 24 15.5 29.5 M15.5 2.5 C23 8 23 24 15.5 29.5"/></svg>
<svg class="a" style="left:61px;top:1423px" width="32" height="32" viewBox="0 0 32 32" fill="none" stroke="#8c8c8c" stroke-width="1.8" stroke-linecap="round" stroke-linejoin="round" ><path d="M13 2 H19 L20 6 L24 8 L28 6 L31 11 L28 14 L28 18 L31 21 L28 26 L24 24 L20 26 L19 30 H13 L12 26 L8 24 L4 26 L1 21 L4 18 L4 14 L1 11 L4 6 L8 8 L12 6 Z"/><circle cx="16" cy="16" r="4.5"/></svg>
<div class="a" style="left:59px;top:1377px;width:466px;height:2px;background:#262626"></div>
<div class="a" style="left:0;top:1503px;width:583px;height:2px;background:#2a2a2a"></div>
<svg class="a" style="left:46px;top:1542px" width="36" height="32" viewBox="0 0 36 32" fill="none" stroke="#f0f0f0" stroke-width="2.4" stroke-linecap="round" stroke-linejoin="round" ><rect x="2" y="2" width="32" height="28" rx="5"/><path d="M11 9 V23"/></svg>
<svg class="a" style="left:3706px;top:640px" width="100" height="100" viewBox="0 0 1071 1071">
<defs><radialGradient id="gl" cx="50%" cy="50%" r="50%"><stop offset="0%" stop-color="#0a1030"/><stop offset="75%" stop-color="#050a1e"/><stop offset="100%" stop-color="#0b0b0b" stop-opacity="0"/></radialGradient></defs>
<circle cx="510" cy="545" r="440" fill="url(#gl)"/>
<path d="M510 130 Q525 500 510 545 Q480 540 100 550 Q470 520 510 130 Z" fill="#a535d0"/>
<path d="M510 130 Q545 520 920 550 Q560 545 510 545 Q525 500 510 130 Z" fill="#2f78cc"/>
<path d="M100 550 Q480 560 510 545 Q520 600 510 900 Q480 580 100 550 Z" fill="#5a2a9a"/>
<path d="M920 550 Q540 580 510 900 Q500 600 510 545 Q560 545 920 550 Z" fill="#10205a"/>
<path d="M510 390 Q520 530 655 545 Q520 560 510 700 Q500 560 355 545 Q500 530 510 390 Z" fill="#a8d0ec"/>
<path d="M335 310 Q340 370 390 375 Q340 380 335 440 Q330 380 280 375 Q330 370 335 310 Z" fill="#8a40b8"/>
<path d="M680 305 Q685 365 735 372 Q685 380 680 435 Q675 380 625 372 Q675 365 680 305 Z" fill="#a0d8e8"/>
<path d="M335 670 Q340 730 390 737 Q340 745 335 800 Q330 745 280 737 Q330 730 335 670 Z" fill="#6a3aa8"/>
<path d="M685 670 Q690 725 735 732 Q690 740 685 790 Q680 740 635 732 Q680 725 685 670 Z" fill="#1c2260"/>
</svg>
<div class="a" style="left:3673px;top:731px;width:89px;height:165px;border:2px solid #333;border-radius:45px;background:#000"></div>
<svg class="a" style="left:3698px;top:760px" width="40" height="40" viewBox="0 0 40 40" fill="none" stroke="#fafafa" stroke-width="2.6" stroke-linejoin="round" stroke-linecap="round">
<path d="M16 8 C17 18 20 21 30 22 C20 23 17 26 16 36 C15 26 12 23 2 22 C12 21 15 18 16 8 Z"/><path d="M30 2 V10 M26 6 H34"/><circle cx="5" cy="33" r="1" fill="#fafafa"/></svg>
<div class="a" style="left:3702px;top:815px;width:30px;height:3px;background:#444"></div>
<div class="a" style="left:3694px;top:820px;width:102px;height:103px;border-radius:10px 0 0 10px;background:#c8008c"></div>
<svg class="a" style="left:3692px;top:819px" width="104" height="104" viewBox="0 0 1071 1071">
<path d="M480 215 H600 V378 L690 348 Q830 310 858 470 L862 555 Q868 640 785 685 L600 790 V865 H480 V702 L390 722 Q240 745 217 600 L213 520 Q210 440 300 392 L480 292 Z" fill="#fff"/>
<path d="M310 583 L598 398 M492 690 L772 497" stroke="#c8008c" stroke-width="30" stroke-linecap="round"/>
</svg>
<div class="a" style="left:3706px;top:1463px;width:90px;height:80px;border-radius:40px 0 0 40px;background:#fff"></div>
<svg class="a" style="left:3729px;top:1482px" width="46" height="42" viewBox="0 0 46 42">
<defs><linearGradient id="br" gradientUnits="userSpaceOnUse" x1="4" y1="2" x2="44" y2="40"><stop offset="0%" stop-color="#f07a3a"/><stop offset="25%" stop-color="#e040b0"/><stop offset="60%" stop-color="#9050e0"/><stop offset="100%" stop-color="#3a90f0"/></linearGradient></defs>
<path d="M21 3 C16 1 10 3 9 8 C4 9 2 13 3 17 C0 20 1 26 4 28 C3 33 7 38 12 38 C15 41 19 41 21 39 Z" fill="url(#br)"/>
<path d="M25 3 C30 1 36 3 37 8 C42 9 44 13 43 17 C46 20 45 26 42 28 C43 33 39 38 34 38 C31 41 27 41 25 39 Z" fill="url(#br)"/>
<path d="M10 14 H17 V26 M8 22 H14 M31 10 L33 15 L38 16 M33 15 L30 21 M30 27 L35 30 L39 27" stroke="#fff" stroke-width="1.6" fill="none" stroke-linecap="round"/></svg>
<div class="a" style="left:3796px;top:12px;width:44px;height:1584px;background:#2c2c2c"></div>
<svg class="a" style="left:3803px;top:25px" width="30" height="24" viewBox="0 0 30 24"><path d="M15 3 L27 20 L3 20 Z" fill="#a3a3a3" stroke="#a3a3a3" stroke-width="4" stroke-linejoin="round"/></svg>
<div class="a" style="left:3805px;top:246px;width:27px;height:960px;border-radius:14px;background:#a3a3a3"></div>
<svg class="a" style="left:3803px;top:1574px" width="30" height="24" viewBox="0 0 30 24"><path d="M3 4 L27 4 L15 21 Z" fill="#a3a3a3" stroke="#a3a3a3" stroke-width="4" stroke-linejoin="round"/></svg>
<div id="topbar" class="a"></div>
<div class="a" style="left:0;top:9px;width:3840px;height:3px;background:#4a4e5a"></div>
</body></html>
